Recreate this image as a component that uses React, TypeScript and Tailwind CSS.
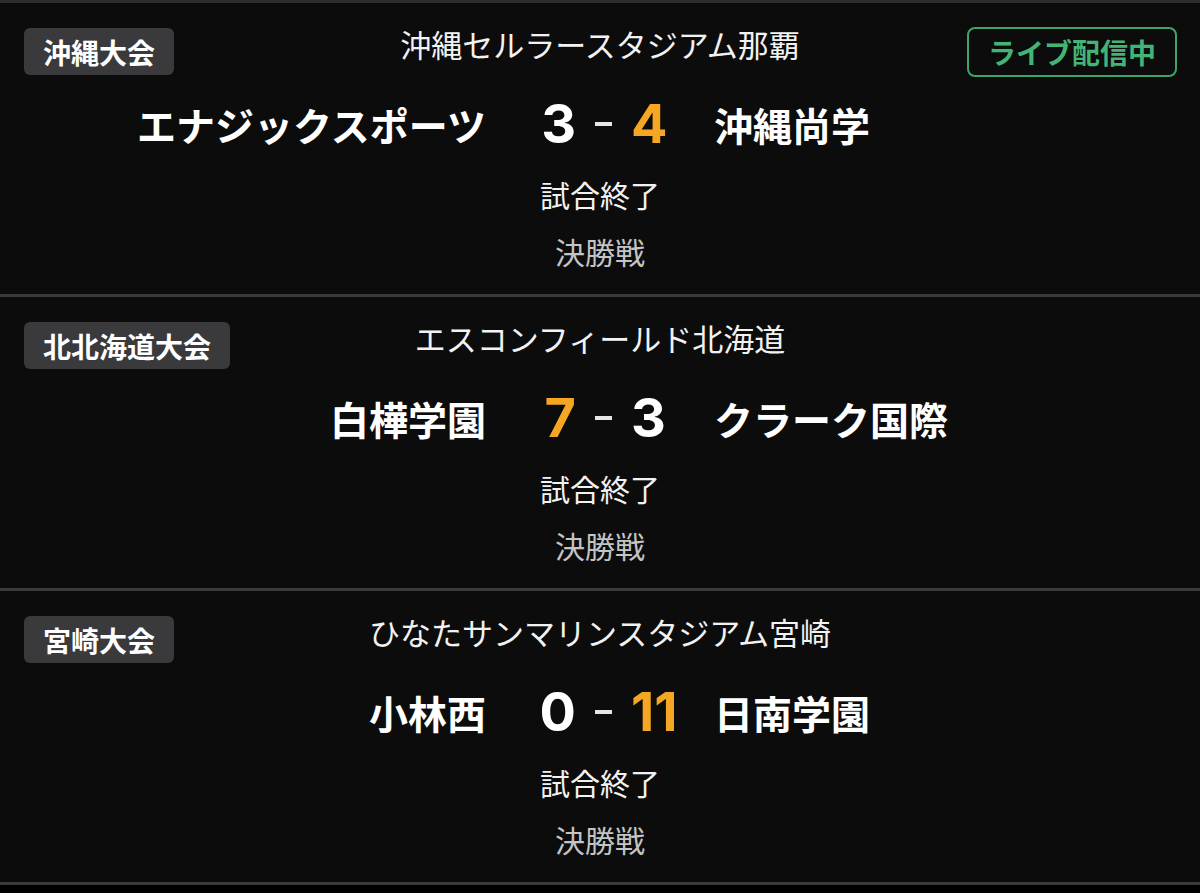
type Game = {
  league: string;
  venue: string;
  live?: boolean;
  home: string;
  away: string;
  homeScore: number;
  awayScore: number;
  status: string;
  round: string;
};

const games: Game[] = [
  {
    league: '沖縄大会',
    venue: '沖縄セルラースタジアム那覇',
    live: true,
    home: 'エナジックスポーツ',
    away: '沖縄尚学',
    homeScore: 3,
    awayScore: 4,
    status: '試合終了',
    round: '決勝戦',
  },
  {
    league: '北北海道大会',
    venue: 'エスコンフィールド北海道',
    home: '白樺学園',
    away: 'クラーク国際',
    homeScore: 7,
    awayScore: 3,
    status: '試合終了',
    round: '決勝戦',
  },
  {
    league: '宮崎大会',
    venue: 'ひなたサンマリンスタジアム宮崎',
    home: '小林西',
    away: '日南学園',
    homeScore: 0,
    awayScore: 11,
    status: '試合終了',
    round: '決勝戦',
  },
];

const jp = "font-['Noto_Sans_CJK_JP',sans-serif]";
const num = "font-['Inter','Liberation_Sans',sans-serif]";

function GameCard({ game }: { game: Game }) {
  const homeWins = game.homeScore > game.awayScore;

  return (
    <section className="bg-[#0c0c0c] px-[24px] pt-[25px] pb-[23px]">
      <div className="grid h-[50px] grid-cols-[1fr_auto_1fr] items-start">
        <div className="flex">
          <span className="flex h-[47px] items-center rounded-md bg-[#3a3a3c] px-[19px] text-[28px] font-bold leading-none text-white">
            {game.league}
          </span>
        </div>
        <div className="mt-[-3px] text-[31px] leading-[38px] text-[#f2f2f2]">{game.venue}</div>
        <div className="flex justify-end">
          {game.live && (
            <span className="mr-[-1px] mt-[-1px] flex h-[50px] items-center rounded-lg border-2 border-[#3aa56b] px-[19px] text-[28px] font-bold leading-none text-[#43b475]">
              ライブ配信中
            </span>
          )}
        </div>
      </div>

      <div className="mt-[18px] flex h-[56px] items-center">
        <div className="flex-1 pr-[1px] text-right text-[39px] font-bold leading-none text-white">
          {game.home}
        </div>
        <div className="flex w-[230px] items-center">
          <span
            className={`${num} w-[89px] text-right text-[54px] font-bold leading-none ${homeWins ? 'text-[#f5a623]' : 'text-white'}`}
          >
            {game.homeScore}
          </span>
          <span className="flex w-[55px] justify-center">
            <span className="h-[4px] w-[17px] bg-[#e6e6e6]" />
          </span>
          <span
            className={`${num} flex-1 text-left text-[54px] font-bold leading-none ${homeWins ? 'text-white' : 'text-[#f5a623]'}`}
          >
            {game.awayScore}
          </span>
        </div>
        <div className="ml-[-3px] flex-1 text-left text-[39px] font-bold leading-none text-white">{game.away}</div>
      </div>

      <div className="mt-[22px] text-center text-[30px] leading-[40px] text-[#f2f2f2]">{game.status}</div>
      <div className="mt-[17px] text-center text-[30px] leading-[40px] text-[#c4c4c4]">{game.round}</div>
    </section>
  );
}

export default function App() {
  return (
    <div className={`${jp} min-h-[893px] w-[1200px] bg-black`}>
      <div className="h-[3px] bg-[#2e2e30]" />
      {games.map((g) => (
        <div key={g.league}>
          <GameCard game={g} />
          <div className="h-[3px] bg-[#3a3a3c]" />
        </div>
      ))}
    </div>
  );
}
